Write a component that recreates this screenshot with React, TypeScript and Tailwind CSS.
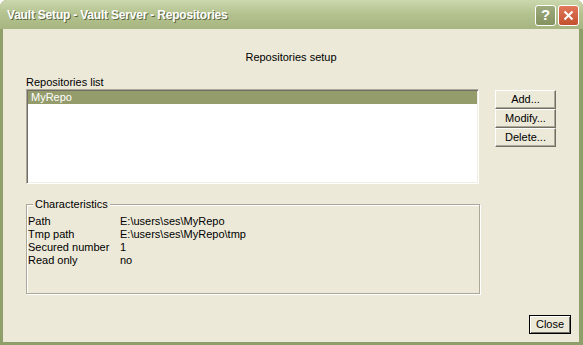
import React from "react";

const ui = "font-['Liberation_Sans',Arial,sans-serif] text-[11px] leading-[13px] text-black";

function XpButton({ label, width, isDefault = false }: { label: string; width: string; isDefault?: boolean }) {
  return (
    <button
      className={`${width} h-[19px] bg-[#ece9d8] text-center ${ui} ${
        isDefault
          ? "border border-black shadow-[inset_1px_1px_0_#fff,inset_-1px_-1px_0_#716f64]"
          : "border border-t-white border-l-white border-r-[#716f64] border-b-[#716f64] shadow-[inset_-1px_-1px_0_#aca899]"
      }`}
    >
      {label}
    </button>
  );
}

const characteristics = [
  { label: "Path", value: "E:\\users\\ses\\MyRepo" },
  { label: "Tmp path", value: "E:\\users\\ses\\MyRepo\\tmp" },
  { label: "Secured number", value: "1" },
  { label: "Read only", value: "no" },
];

export default function App() {
  return (
    <div className="w-[583px] h-[345px] flex flex-col bg-[#8e9f6a] rounded-t-[7px] overflow-hidden">
      {/* title bar */}
      <div className="h-[29px] flex items-center pl-[7px] pr-[4px] bg-gradient-to-b from-[#cbd8ae] via-[#b3c18e] to-[#a7b681]">
        <span className="flex-1 font-['Liberation_Sans',Arial,sans-serif] font-bold text-[12px] tracking-[-0.2px] text-white [text-shadow:1px_1px_0_#5a6540]">
          Vault Setup - Vault Server - Repositories
        </span>
        <div className="flex gap-[2px] mt-[1px]">
          <div className="w-[21px] h-[21px] rounded-[3px] border border-white bg-gradient-to-b from-[#9eab7e] to-[#84925f] flex items-center justify-center text-white font-bold text-[15px] font-['Liberation_Sans',Arial,sans-serif]">
            ?
          </div>
          <div className="w-[21px] h-[21px] rounded-[3px] border border-white bg-gradient-to-b from-[#e0785a] to-[#c4502e] flex items-center justify-center">
            <svg width="11" height="11" viewBox="0 0 11 11">
              <path d="M1.5 1.5 L9.5 9.5 M9.5 1.5 L1.5 9.5" stroke="white" strokeWidth="2" />
            </svg>
          </div>
        </div>
      </div>

      {/* client area */}
      <div className="flex-1 ml-[3px] mr-[4px] mb-[3px] bg-[#ece9d8] pt-[22px] px-[23px] flex flex-col">
        <div className={`${ui} text-center`}>Repositories setup</div>

        <div className={`${ui} mt-[12px]`}>Repositories list</div>
        <div className="flex items-start">
          <div className="w-[454px] h-[95px] bg-white border border-t-[#aca899] border-l-[#aca899] border-r-white border-b-white shadow-[inset_1px_1px_0_#716f64,inset_-1px_-1px_0_#f1efe2] p-[1px]">
            <div className={`h-[13px] bg-[#949c6c] pl-[3px] ${ui} text-white`}>MyRepo</div>
          </div>
          <div className="ml-[16px] mt-[1px] flex flex-col">
            <XpButton label="Add..." width="w-[61px]" />
            <XpButton label="Modify..." width="w-[61px]" />
            <XpButton label="Delete..." width="w-[61px]" />
          </div>
        </div>

        <div className="relative mt-[20px] w-[454px] h-[90px] border border-[#aca899] shadow-[1px_1px_0_#fff,inset_1px_1px_0_#fff] pt-[10px] pl-[1px]">
          <span className={`absolute -top-[7px] left-[6px] px-[2px] bg-[#ece9d8] ${ui}`}>Characteristics</span>
          {characteristics.map((row) => (
            <div key={row.label} className={`flex ${ui}`}>
              <span className="w-[92px]">{row.label}</span>
              <span>{row.value}</span>
            </div>
          ))}
        </div>

        <div className="mt-auto mb-[8px] flex justify-end mr-[-15px]">
          <XpButton label="Close" width="w-[42px]" isDefault />
        </div>
      </div>
    </div>
  );
}
